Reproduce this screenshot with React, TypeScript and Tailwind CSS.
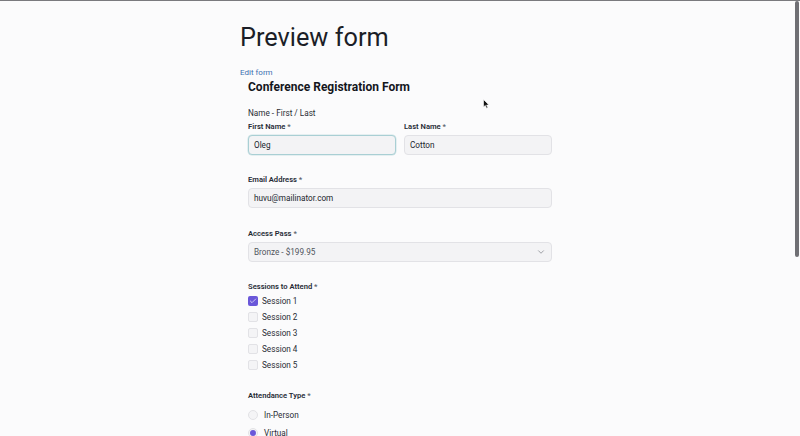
import { Check, ChevronDown } from "lucide-react";

const sessions = ["Session 1", "Session 2", "Session 3", "Session 4", "Session 5"];

function Label({ text }: { text: string }) {
  return (
    <div className="text-[7.6px] leading-[10px] font-semibold text-[#262a35]">
      {text} <span className="text-[#555a66] font-medium">*</span>
    </div>
  );
}

function Field({ value, focused, className }: { value: string; focused?: boolean; className?: string }) {
  return (
    <div
      className={`h-[20px] rounded-[4px] border bg-[#f3f3f5] px-[5px] flex items-center text-[8.2px] text-[#22252d] ${
        focused ? "border-[#a9cfd4] shadow-[0_0_0_0.5px_#cfe3e6]" : "border-[#e2e2e6]"
      } ${className ?? ""}`}
    >
      {value}
    </div>
  );
}

export default function App() {
  return (
    <div className="relative h-[436px] overflow-hidden bg-[#fbfbfc] border-t border-[#7a7a7e] font-['Roboto',sans-serif]">
      <div className="w-[320px] mx-auto pt-[19px]">
        <h1 className="text-[25.3px] leading-[36px] text-[#1b1e27]">Preview form</h1>
        <div className="mt-[11px] text-[8px] leading-[11px] text-[#3c6fb0]">Edit form</div>

        <div className="px-[8px]">
          <h2 className="mt-[1px] text-[12px] leading-[16px] font-bold text-[#14161c]">Conference Registration Form</h2>

          <div className="mt-[12px] text-[8.2px] leading-[12px] text-[#2a2d35]">Name - First / Last</div>

          <div className="mt-[3px] flex gap-[8px]">
            <div className="w-[148px] flex flex-col gap-[3px]">
              <Label text="First Name" />
              <Field value="Oleg" focused />
            </div>
            <div className="w-[148px] flex flex-col gap-[3px]">
              <Label text="Last Name" />
              <Field value="Cotton" />
            </div>
          </div>

          <div className="mt-[20px] flex flex-col gap-[3px]">
            <Label text="Email Address" />
            <Field value="huvu@mailinator.com" />
          </div>

          <div className="mt-[21px] flex flex-col gap-[3px]">
            <Label text="Access Pass" />
            <div className="h-[20px] rounded-[4px] border border-[#e2e2e6] bg-[#f3f3f5] px-[5px] flex items-center justify-between text-[8.2px] text-[#50535c]">
              <span>Bronze - $199.95</span>
              <ChevronDown className="w-[10px] h-[10px] text-[#6b6e76]" strokeWidth={1.5} />
            </div>
          </div>

          <div className="mt-[20px]">
            <Label text="Sessions to Attend" />
            <div className="mt-[4px] flex flex-col gap-[6px]">
              {sessions.map((s, i) => (
                <div key={s} className="flex items-center gap-[4px] h-[10px]">
                  {i === 0 ? (
                    <span className="w-[10px] h-[10px] rounded-[2px] bg-[#6a57d9] flex items-center justify-center">
                      <Check className="w-[8px] h-[8px] text-white" strokeWidth={2} />
                    </span>
                  ) : (
                    <span className="w-[10px] h-[10px] rounded-[2px] border border-[#e2e2e6] bg-[#f4f4f6]" />
                  )}
                  <span className="text-[8.2px] text-[#2a2d35]">{s}</span>
                </div>
              ))}
            </div>
          </div>

          <div className="mt-[21px]">
            <Label text="Attendance Type" />
            <div className="mt-[9px] flex flex-col gap-[8px]">
              <div className="flex items-center gap-[6px] h-[10px]">
                <span className="w-[10px] h-[10px] rounded-full border border-[#e2e2e6] bg-[#f4f4f6]" />
                <span className="text-[8.2px] text-[#2a2d35]">In-Person</span>
              </div>
              <div className="flex items-center gap-[6px] h-[10px]">
                <span className="w-[10px] h-[10px] rounded-full border border-[#e2e2e6] bg-[#f4f4f6] flex items-center justify-center">
                  <span className="w-[6px] h-[6px] rounded-full bg-[#6a57d9]" />
                </span>
                <span className="text-[8.2px] text-[#2a2d35]">Virtual</span>
              </div>
            </div>
          </div>
        </div>
      </div>

      <div className="absolute right-[1px] top-0 w-[4px] h-[256px] rounded-full bg-[#6f6f74]" />

      <svg className="absolute left-[483px] top-[98px]" width="7" height="10" viewBox="0 0 7 10">
        <path d="M0.5 0.5 L0.5 8 L2.3 6.4 L3.6 9.3 L4.8 8.8 L3.6 6 L6 6 Z" fill="#111" stroke="#fff" strokeWidth="0.6" />
      </svg>
    </div>
  );
}
